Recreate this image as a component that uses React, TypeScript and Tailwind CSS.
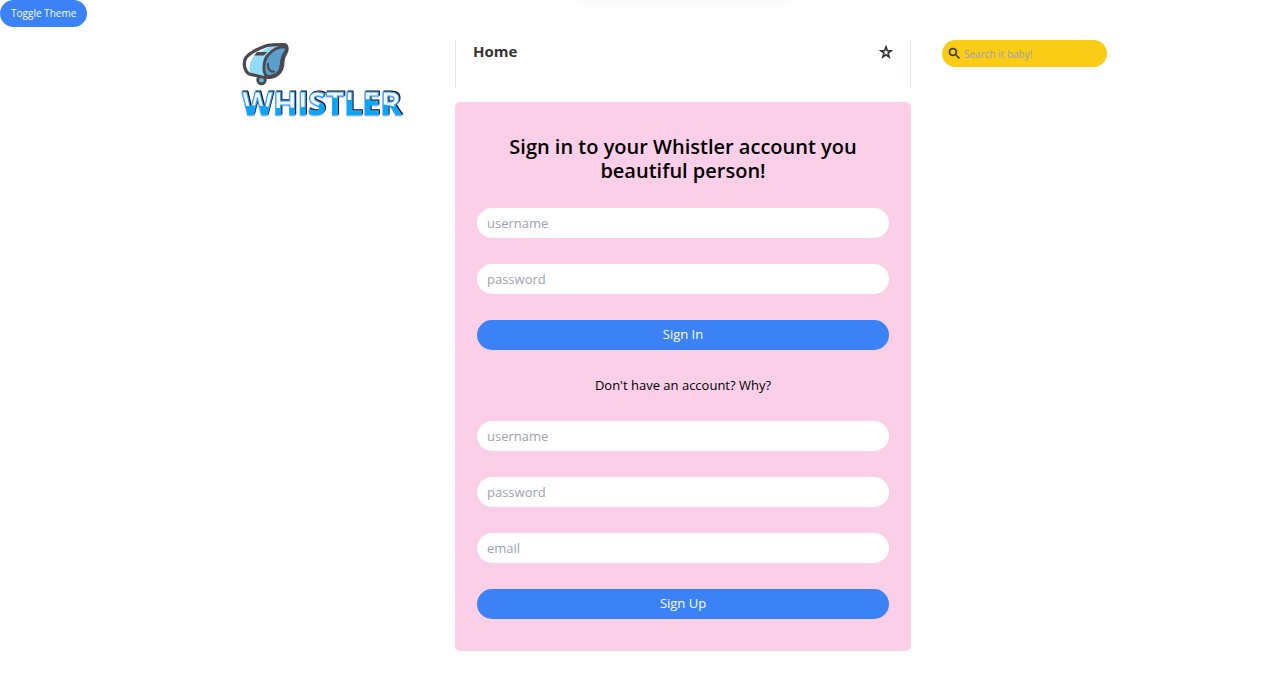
import React from "react";

function WhistleIcon() {
  return (
    <svg viewBox="0 0 48 46" className="h-[46px] w-12" aria-hidden="true">
      <circle cx="20.500" cy="38" r="3.800" fill="#6db4dc" stroke="#4a4a4f" strokeWidth="2.800" />
      <path
        d="M26 3.500Q28 2.800 31 2.800L43 2.500Q46.500 3 46 8C45 12 42 14 42 19C42 25 41 29 37 32C33 35.500 27 36 21 35L8 32C3 29 2 20 5 15.500C10 9.500 18 6.500 26 3.500Z"
        fill="#92daf8"
        stroke="#4a4a4f"
        strokeWidth="3.200"
        strokeLinejoin="round"
      />
      <path d="M26 5.500C18 8 10 12 6.500 17C4 21 5 27 9 30C8 22 10 16 16 12L28 5Z" fill="#ffffff" />
      <path
        d="M44.500 4.500C38 4.500 31 8 27 13C22.500 18 21.500 29 25 33.500C29 35.500 35 33.500 38.500 29C41 24 39.500 18 42.500 13L45.500 8Z"
        fill="#5c9fce"
        stroke="#4a4a4f"
        strokeWidth="2.800"
        strokeLinejoin="round"
      />
      <path d="M27 22C26.500 27 29.500 30.500 33 29.500" fill="none" stroke="#4a4a4f" strokeWidth="2" strokeLinecap="round" />
      <path d="M16 10H26L23 13.500H13Z" fill="#4a4a4f" />
    </svg>
  );
}

function WordMark() {
  return (
    <svg viewBox="0 0 172 46" className="-mt-[9px] h-[46px] w-[172px] font-['Open_Sans',sans-serif]" role="img" aria-label="Whistler">
      <defs>
        <pattern id="wave" width="172" height="46" patternUnits="userSpaceOnUse">
          <rect width="172" height="46" fill="#f4f5ff" />
          <path
            d="M0 28C10 26 18 26 28 28S48 29 62 28S76 31 80 22S96 21 108 21S126 19 134 22S148 29 172 27V46H0Z"
            fill="#03a9f4"
          />
        </pattern>
      </defs>
      <text
        x="1"
        y="36"
        fontSize="32"
        fontWeight="700"
        fill="url(#wave)"
        stroke="#2f9ff5"
        strokeWidth="1.200"
        className="[filter:drop-shadow(1px_-1px_0_#111827)_drop-shadow(0_1px_0_#c7cdf2)]"
      >
        WHISTLER
      </text>
    </svg>
  );
}

function Field({ id, label, type = "text" }: { id: string; label: string; type?: string }) {
  return (
    <input
      id={id}
      type={type}
      aria-label={label}
      placeholder={label}
      className="h-[30px] w-full rounded-full bg-white px-[10px] text-[13px] text-black outline-none placeholder:text-[#9ca3af] focus:ring-2 focus:ring-[#60a5fa]"
    />
  );
}

function SubmitButton({ children }: { children: React.ReactNode }) {
  return (
    <button type="submit" className="h-[30px] w-full rounded-full bg-[#3b82f6] text-[13px] text-white hover:bg-[#2563eb]">
      {children}
    </button>
  );
}

export default function App() {
  const stop = (e: React.FormEvent) => e.preventDefault();
  return (
    <div className="relative min-h-screen bg-white pb-5 font-['Open_Sans','Noto_Sans',sans-serif] text-black">
      <div className="pointer-events-none absolute inset-x-0 -top-2 mx-auto h-2 w-1/6 translate-x-1/4 shadow-[0_0_8px_rgba(0,0,0,0.06)]" />
      <button type="button" className="block h-[27px] rounded-full bg-[#3b82f6] px-[11px] text-[10px] text-white hover:bg-[#2563eb]">
        Toggle Theme
      </button>

      <div className="mt-[13px] grid grid-cols-[227fr_228fr_456fr_228fr_122fr]">
        <aside className="col-start-2 pt-[2px] pl-[14px]">
          <a href="#home" className="inline-flex flex-col">
            <WhistleIcon />
            <WordMark />
          </a>
        </aside>

        <main>
          <header className="flex h-12 items-start justify-between border-x border-slate-200 px-[17px]">
            <h1 className="text-[15px] leading-[23px] font-bold text-[#333]">Home</h1>
            <button type="button" aria-label="Top posts" className="flex h-[23px] items-center text-[#333]">
              <svg viewBox="0 0 14 14" className="size-[14px]" aria-hidden="true">
                <path
                  d="M7 1.800 8.300 5.600 12.200 5.700 9.100 8.100 10.200 12 7 9.800 3.800 12 4.900 8.100 1.800 5.700 5.700 5.600Z"
                  fill="none"
                  stroke="currentColor"
                  strokeWidth="1.600"
                />
              </svg>
            </button>
          </header>

          <section className="mt-[14px] flex flex-col gap-[25px] rounded-[5px] bg-[#fbcfe8] px-[22px] pt-[33px] pb-8">
            <h2 className="text-center text-[20px] leading-6 font-semibold">
              Sign in to your Whistler account you beautiful person!
            </h2>
            <form onSubmit={stop} className="flex flex-col gap-[26px]">
              <Field id="signin-username" label="username" />
              <Field id="signin-password" label="password" type="password" />
              <SubmitButton>Sign In</SubmitButton>
            </form>
            <p className="text-center text-[13px] leading-[21px]">Don't have an account? Why?</p>
            <form onSubmit={stop} className="flex flex-col gap-[26px]">
              <Field id="signup-username" label="username" />
              <Field id="signup-password" label="password" type="password" />
              <Field id="signup-email" label="email" type="email" />
              <SubmitButton>Sign Up</SubmitButton>
            </form>
          </section>
        </main>

        <aside className="pr-8 pl-[31px]">
          <label className="flex h-[27px] items-center gap-[2px] rounded-full bg-[#facc15] px-[5px]">
            <svg viewBox="0 0 24 24" className="size-[15px] shrink-0 text-[#333]" fill="currentColor" stroke="currentColor" strokeWidth="0.500" aria-hidden="true">
              <path d="M15.500 14h-.79l-.28-.27A6.471 6.471 0 0 0 16 9.500 6.500 6.500 0 1 0 9.500 16c1.610 0 3.090-.59 4.230-1.570l.27.28v.79l5 4.990L20.490 19l-4.990-5zm-6 0C7.010 14 5 11.990 5 9.500S7.010 5 9.500 5 14 7.010 14 9.500 11.990 14 9.500 14z" />
            </svg>
            <input
              type="search"
              aria-label="Search"
              placeholder="Search it baby!"
              className="w-full min-w-0 bg-transparent text-[10px] leading-4 outline-none placeholder:text-[#9ca3af]"
            />
          </label>
        </aside>
      </div>
    </div>
  );
}
